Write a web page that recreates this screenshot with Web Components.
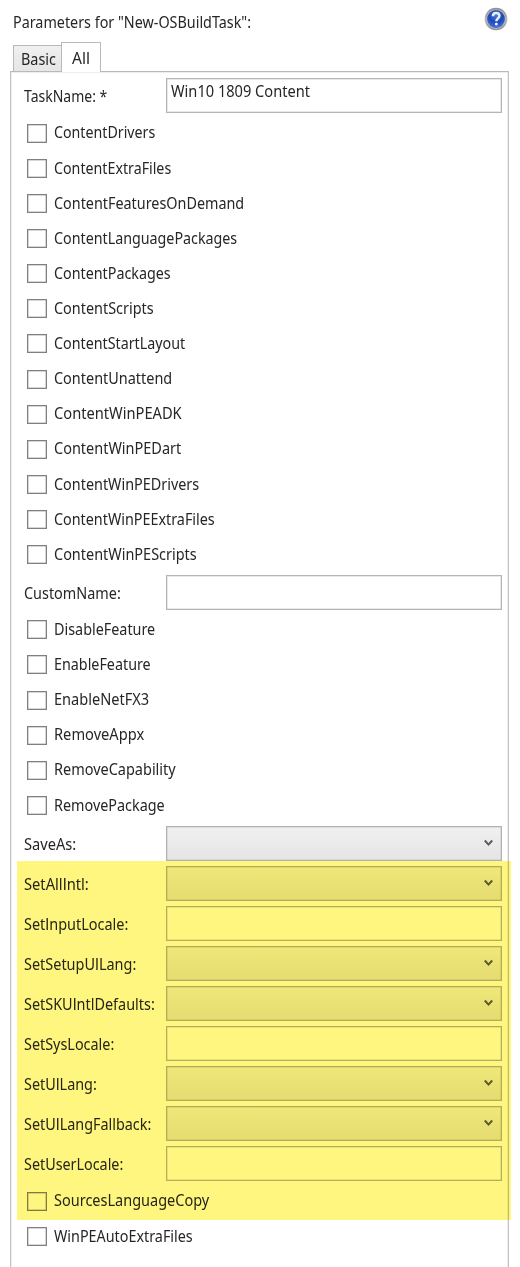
<!DOCTYPE html>
<html lang="en">
<head>
<meta charset="utf-8">
<title>New-OSBuildTask</title>
<style>
html,body{margin:0;background:#fff}
body{width:520px;height:1267px;overflow:hidden;font-family:"Noto Sans","Open Sans",sans-serif;font-size:15.6px;color:#262626}
</style>
</head>
<body>
<build-dialog></build-dialog>
<script>
function define(name, html, setup) {
  const t = document.createElement('template');
  t.innerHTML = html;
  customElements.define(name, class extends HTMLElement {
    connectedCallback() {
      if (this.shadowRoot) return;
      this.attachShadow({mode: 'open'}).appendChild(t.content.cloneNode(true));
      if (setup) setup(this, this.shadowRoot);
    }
  });
}

// A single line of text condensed to a given advance width.
// The capital I is set in a face that has no slab serifs on it.
define('fit-text', `<style>
:host{display:block;white-space:nowrap;line-height:20px;height:20px}
span{display:inline-block;transform-origin:0 50%}
b{font-family:"Open Sans",Roboto,sans-serif;font-family:Roboto,sans-serif;font-weight:400;line-height:1}
</style><span></span>`, (el, root) => {
  const s = root.querySelector('span');
  el.getAttribute('text').split(/(I)/).forEach(part => {
    if (part === 'I') {
      const b = document.createElement('b');
      b.textContent = part;
      s.appendChild(b);
    } else if (part) s.append(part);
  });
  const w = s.getBoundingClientRect().width;
  const want = parseFloat(el.getAttribute('w'));
  el.style.width = want + 'px';
  if (w) s.style.transform = 'scaleX(' + want / w + ')';
});

define('help-icon', `<style>:host{display:block;width:24px;height:24px}svg{display:block}</style>
<svg width="24" height="24" viewBox="0 0 24 24">
<defs><radialGradient id="b" cx="50%" cy="30%" r="70%"><stop offset="0" stop-color="#4a78dc"/><stop offset=".55" stop-color="#2048b4"/><stop offset="1" stop-color="#4070e0"/></radialGradient>
<linearGradient id="r" x2="0" y2="1"><stop offset="0" stop-color="#8d8d8d"/><stop offset=".5" stop-color="#b4b4b4"/><stop offset="1" stop-color="#929292"/></linearGradient></defs>
<circle cx="12" cy="12" r="11.3" fill="url(#r)"/><circle cx="12" cy="12" r="9.7" fill="#b9bac2"/>
<circle cx="12" cy="12" r="8.9" fill="url(#b)"/>
<path d="M8.9 9.2C9 6.8 10.4 6 12.1 6c2 0 3.3 1.100 3.300 2.800 0 2.500-3 2.600-3 5.400" fill="none" stroke="#e8edfb" stroke-width="2.500"/>
<circle cx="12.300" cy="17" r="1.500" fill="#e8edfb"/>
</svg>`);

define('task-tab', `<style>
:host{display:flex;box-sizing:border-box;border:1px solid #b9b9b9;border-bottom:0;width:49px;height:26px;padding:3px 0 0 7px;background:linear-gradient(#f0f0f0,#e6e6e6)}
:host([active]){width:40px;height:30px;padding:5px 0 0 10px;margin:0 0 -1px -1px;background:#fff;z-index:1}
</style><slot></slot>`);

define('check-row', `<style>
:host{display:flex;align-items:center;height:35.12px;padding-left:16px}
i{box-sizing:border-box;width:20px;height:19px;border:1px solid #808080;box-shadow:inset 0 0 0 .5px #b0b0b0;background:#fff;margin-right:6.500px}
fit-text{margin-top:-1.800px}
</style><i></i>`, (el, root) => {
  const t = document.createElement('fit-text');
  t.setAttribute('text', el.getAttribute('label'));
  t.setAttribute('w', el.getAttribute('w') - .8);
  root.appendChild(t);
});

define('field-row', `<style>
:host{display:grid;grid-template-columns:142.400px 336px;align-items:center;height:40.1px;padding-left:13px}
.box{box-sizing:border-box;height:35px;border:1px solid #b4b4bc;box-shadow:inset 0 0 0 .5px #d4d4da;background:#fff;padding:2px 4px}
.box.select{border-color:#b2b2b2;box-shadow:inset 0 0 0 .5px #c8c8c8;background:linear-gradient(#f0f0f0,#e5e5e5);display:flex;justify-content:flex-end;padding:12px 8px 0 0}
:host>fit-text,fit-text.label{margin-top:1px}
svg{display:block}
</style>`, (el, root) => {
  const mk = (text, w) => {
    const t = document.createElement('fit-text');
    t.setAttribute('text', text); t.setAttribute('w', w);
    return t;
  };
  const label = mk(el.getAttribute('label'), el.getAttribute('w') - .7);
  label.className = 'label';
  root.appendChild(label);
  const b = document.createElement('div');
  b.className = 'box';
  if (el.hasAttribute('select')) {
    b.classList.add('select');
    b.innerHTML = '<svg width="9" height="8" viewBox="0 0 9 8"><path d="M.8 1.500 4.500 5.600 8.200 1.500" fill="none" stroke="#5c5c5c" stroke-width="2"/></svg>';
  } else if (el.hasAttribute('value')) {
    b.appendChild(mk(el.getAttribute('value'), el.getAttribute('vw')));
  }
  root.appendChild(b);
});

// Rows marked with a translucent yellow highlighter.
define('marked-rows', `<style>
:host{display:block;position:relative}
:host::after{content:"";position:absolute;left:6px;top:-2px;width:494px;bottom:-1px;background:#fff67f;mix-blend-mode:multiply}
</style><slot></slot>`);

define('build-dialog', `<style>
:host{display:block;width:520px;height:1267px;overflow:hidden}
header{display:flex;justify-content:space-between;align-items:flex-start;height:42px;padding:0 12px 0 13px;box-sizing:border-box}
header fit-text{margin-top:11.500px}
help-icon{margin-top:7.300px}
nav{display:flex;align-items:flex-end;height:29px;padding-left:13px;position:relative;z-index:1}
main{box-sizing:border-box;margin-left:10px;width:499px;height:1210px;border:1px solid #c3c3c3;border-top-color:#b9b9b9;box-shadow:inset 0 0 0 .5px #dedede;padding-top:3.700px}
</style>
<header><fit-text text='Parameters for "New-OSBuildTask":' w="238"></fit-text><help-icon></help-icon></header>
<nav><task-tab><fit-text text="Basic" w="35"></fit-text></task-tab><task-tab active><fit-text text="All" w="18"></fit-text></task-tab></nav>
<main>
<field-row label="TaskName: *" w="84" value="Win10 1809 Content" vw="139"></field-row>
<check-row label="ContentDrivers" w="102"></check-row>
<check-row label="ContentExtraFiles" w="118"></check-row>
<check-row label="ContentFeaturesOnDemand" w="191"></check-row>
<check-row label="ContentLanguagePackages" w="184"></check-row>
<check-row label="ContentPackages" w="117.500"></check-row>
<check-row label="ContentScripts" w="100.500"></check-row>
<check-row label="ContentStartLayout" w="132"></check-row>
<check-row label="ContentUnattend" w="119"></check-row>
<check-row label="ContentWinPEADK" w="128.500"></check-row>
<check-row label="ContentWinPEDart" w="128"></check-row>
<check-row label="ContentWinPEDrivers" w="146"></check-row>
<check-row label="ContentWinPEExtraFiles" w="161.500"></check-row>
<check-row label="ContentWinPEScripts" w="143.500"></check-row>
<field-row label="CustomName:" w="97.500"></field-row>
<check-row label="DisableFeature" w="102"></check-row>
<check-row label="EnableFeature" w="97.500"></check-row>
<check-row label="EnableNetFX3" w="96"></check-row>
<check-row label="RemoveAppx" w="91"></check-row>
<check-row label="RemoveCapability" w="122.500"></check-row>
<check-row label="RemovePackage" w="111.500"></check-row>
<field-row label="SaveAs:" w="53" select></field-row>
<marked-rows>
<field-row label="SetAllIntl:" w="65.500" select></field-row>
<field-row label="SetInputLocale:" w="105"></field-row>
<field-row label="SetSetupUILang:" w="113" select></field-row>
<field-row label="SetSKUIntlDefaults:" w="131.500" select></field-row>
<field-row label="SetSysLocale:" w="91"></field-row>
<field-row label="SetUILang:" w="73.500" select></field-row>
<field-row label="SetUILangFallback:" w="128" select></field-row>
<field-row label="SetUserLocale:" w="100"></field-row>
<check-row label="SourcesLanguageCopy" w="156"></check-row>
</marked-rows>
<check-row label="WinPEAutoExtraFiles" w="139.500"></check-row>
</main>`);
</script>
</body>
</html>
